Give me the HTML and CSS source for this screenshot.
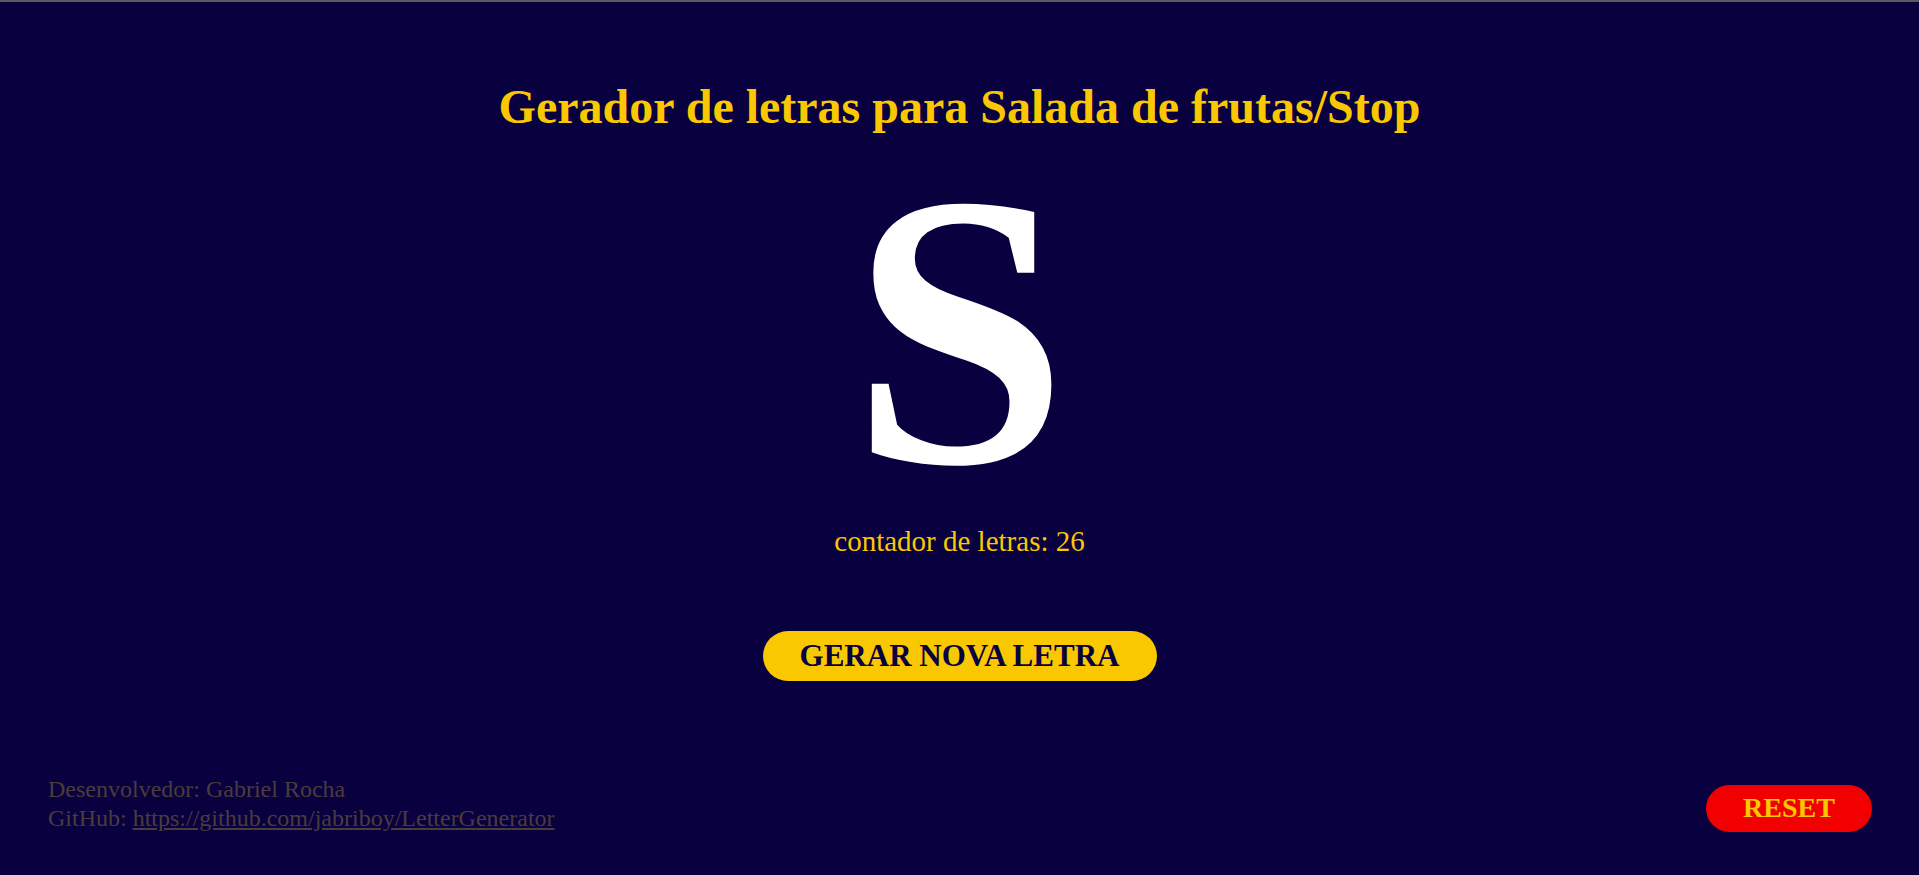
FILE: index.html
```html
<!DOCTYPE html>
<html lang="pt-BR">
<head>
<meta charset="utf-8">
<title>Gerador de letras</title>
<link rel="stylesheet" href="styles.css">
</head>
<body>
<div class="page">
  <main class="main">
    <h1 class="title">Gerador de letras para Salada de frutas/Stop</h1>
    <div class="letter">S</div>
    <p class="counter">contador de letras: 26</p>
    <button class="btn-gerar" type="button">GERAR NOVA LETRA</button>
  </main>
  <footer class="footer">
    <div class="credits">
      <div>Desenvolvedor: Gabriel Rocha</div>
      <div>GitHub: <a class="link" href="#">https://github.com/jabriboy/LetterGenerator</a></div>
    </div>
    <button class="btn-reset" type="button">RESET</button>
  </footer>
</div>
</body>
</html>
```

FILE: styles.css
```css
html, body {
  margin: 0;
  padding: 0;
  height: 100%;
}
body {
  background: #090040;
  font-family: "Liberation Serif", "Times New Roman", serif;
  border-top: 2px solid #5a5a5a;
  box-sizing: border-box;
}
.page {
  display: flex;
  flex-direction: column;
  height: 100%;
}
.main {
  flex: 1;
  display: flex;
  flex-direction: column;
  align-items: center;
}
.title {
  margin: 76px 0 0;
  font-size: 48px;
  font-weight: bold;
  color: #f9c800;
  line-height: 1.2;
}
.letter {
  margin-top: 26px;
  font-size: 390px;
  font-weight: bold;
  line-height: 336px;
  color: #ffffff;
}
.counter {
  margin: 27px 0 0;
  font-size: 29px;
  line-height: 33px;
  color: #f9c800;
}
.btn-gerar {
  margin-top: 73px;
  width: 394px;
  height: 50px;
  padding: 0;
  border: none;
  border-radius: 25px;
  background: #f9c800;
  color: #090040;
  font-family: "Liberation Serif", "Times New Roman", serif;
  font-weight: bold;
  font-size: 31px;
  cursor: pointer;
}
.footer {
  display: flex;
  justify-content: space-between;
  align-items: center;
  padding: 0 47px 42px 48px;
}
.credits {
  color: #4b3c3c;
  font-size: 24px;
  line-height: 29px;
}
.link {
  color: #4b3c3c;
}
.btn-reset {
  margin-top: 8px;
  width: 166px;
  height: 47px;
  padding: 0;
  border: none;
  border-radius: 24px;
  background: #f20000;
  color: #f9c800;
  font-family: "Liberation Serif", "Times New Roman", serif;
  font-weight: bold;
  font-size: 28px;
  cursor: pointer;
}
```
